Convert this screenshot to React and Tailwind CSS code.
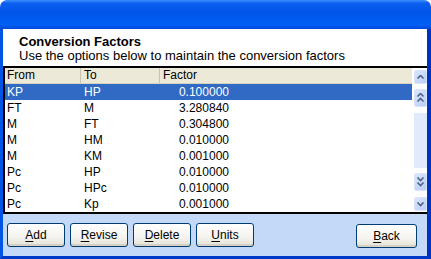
import React from 'react';

const rows = [
  { from: 'KP', to: 'HP', factor: '0.100000' },
  { from: 'FT', to: 'M', factor: '3.280840' },
  { from: 'M', to: 'FT', factor: '0.304800' },
  { from: 'M', to: 'HM', factor: '0.010000' },
  { from: 'M', to: 'KM', factor: '0.001000' },
  { from: 'Pc', to: 'HP', factor: '0.010000' },
  { from: 'Pc', to: 'HPc', factor: '0.010000' },
  { from: 'Pc', to: 'Kp', factor: '0.001000' },
];

function Chevron({ dir = 'up', double = false }) {
  const up = dir === 'up';
  const one = (y) => (
    <path
      d={up ? `M1.5 ${y + 3.5} L4.5 ${y + 0.5} L7.5 ${y + 3.5}` : `M1.5 ${y + 0.5} L4.5 ${y + 3.5} L7.5 ${y + 0.5}`}
      fill="none"
      stroke="#4d6185"
      strokeWidth="1.6"
    />
  );
  return (
    <svg width="9" height={double ? 10 : 5} viewBox={`0 0 9 ${double ? 10 : 5}`}>
      {one(0)}
      {double && one(5)}
    </svg>
  );
}

function ScrollBtn({ dir, double, h }) {
  return (
    <div
      className={`w-[13px] ${h} rounded-[2px] border border-[#d9e4fb] bg-[linear-gradient(135deg,#dbe6fd,#bccdf5)] flex items-center justify-center`}
    >
      <Chevron dir={dir} double={double} />
    </div>
  );
}

function XpButton({ label, mn, w = 'w-[58px]' }) {
  const rest = label.slice(1);
  return (
    <button className={`${w} h-[24px] rounded-[3px] border border-[#003c74] bg-[linear-gradient(to_bottom,#ffffff,#f4f3ee_60%,#e3e1d6)] text-[12px] text-black shadow-[inset_0_-2px_0_#d6d0c5]`}>
      <span className="underline underline-offset-2">{mn}</span>
      {rest}
    </button>
  );
}

export default function App() {
  return (
    <div className="w-[431px] h-[259px] bg-white font-['Liberation_Sans',Arial,sans-serif] text-black">
      <div className="h-[29px] rounded-t-[7px] bg-[linear-gradient(to_bottom,#3a8dfc_0%,#0a5ef0_12%,#0055e8_45%,#0060f6_85%,#0048d8_100%)]" />
      <div className="h-[230px] flex flex-col border-l-[3px] border-r-[4px] border-b-[3px] border-l-[#0054e6] border-r-[#0032c0] border-b-[#0038c8]">
        <div className="h-[37px] pt-[6px] pl-[16px] bg-white">
          <div className="text-[13px] leading-[14px] font-bold">Conversion Factors</div>
          <div className="text-[13px] leading-[14px]">Use the options below to maintain the conversion factors</div>
        </div>
        <div className="h-[2px] bg-black" />
        <div className="h-[144px] flex bg-white">
          <div className="w-[2px] bg-black" />
          <div className="flex-1 flex flex-col text-[12px]">
            <div className="h-[16px] flex bg-[#ece9d8] border-b border-[#d6d2c2] leading-[15px]">
              <div className="w-[76px] pl-[2px] border-r border-[#c7c5b2]">From</div>
              <div className="w-[79px] pl-[3px] border-r border-[#c7c5b2]">To</div>
              <div className="pl-[3px]">Factor</div>
            </div>
            {rows.map((r, i) => (
              <div
                key={i}
                className={`h-[16px] flex leading-[16px] ${i === 0 ? 'bg-[#316ac5] text-white' : 'bg-white'}`}
              >
                <div className="w-[76px] pl-[2px]">{r.from}</div>
                <div className="w-[79px] pl-[3px]">{r.to}</div>
                <div className="w-[72px] text-right pr-[3px]">{r.factor}</div>
              </div>
            ))}
          </div>
          <div className="w-[15px] pl-[2px] pt-[2px] flex flex-col">
            <ScrollBtn dir="up" h="h-[14px]" />
            <div className="h-[5px]" />
            <ScrollBtn dir="up" double h="h-[18px]" />
            <div className="h-[6px]" />
            <div className="w-[13px] h-[55px] bg-[#e1eafc]" />
            <div className="h-[5px]" />
            <ScrollBtn dir="down" double h="h-[18px]" />
            <div className="h-[6px]" />
            <ScrollBtn dir="down" h="h-[14px]" />
          </div>
        </div>
        <div className="h-[2px] bg-black" />
        <div className="flex-1 bg-[#c3d9f7] flex items-start pt-[9px] pl-[4px] pr-[10px]">
          <div className="flex gap-[5px]">
            <XpButton label="Add" mn="A" />
            <XpButton label="Revise" mn="R" />
            <XpButton label="Delete" mn="D" />
            <XpButton label="Units" mn="U" />
          </div>
          <div className="ml-auto">
            <XpButton label="Back" mn="B" w="w-[61px]" />
          </div>
        </div>
      </div>
    </div>
  );
}
